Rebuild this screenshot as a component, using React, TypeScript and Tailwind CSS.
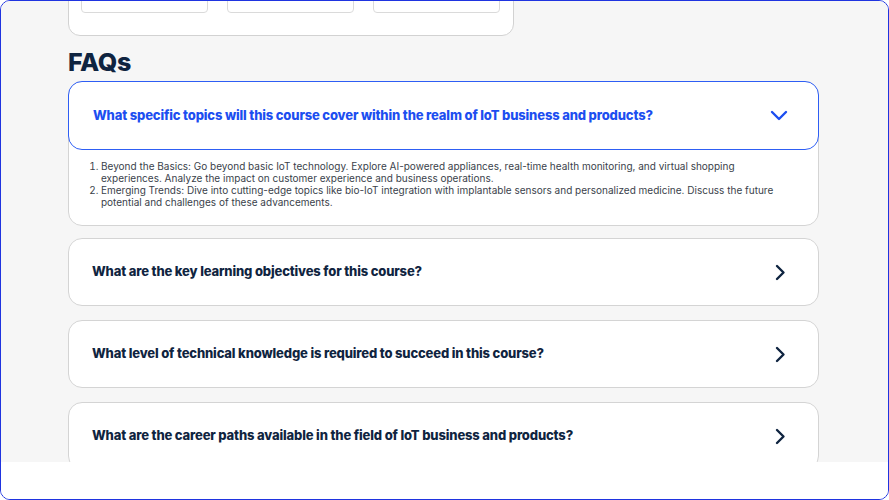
const questions = [
  'What are the key learning objectives for this course?',
  'What level of technical knowledge is required to succeed in this course?',
  'What are the career paths available in the field of IoT business and products?',
];

function ChevronDownIcon() {
  return (
    <svg width="18" height="11" viewBox="0 0 18 11" fill="none" className="text-[#1c4ef0]">
      <path d="M2 2l7 7 7-7" stroke="currentColor" strokeWidth="2.4" strokeLinecap="round" strokeLinejoin="round" />
    </svg>
  );
}

function ChevronRightIcon() {
  return (
    <svg width="11" height="17" viewBox="0 0 11 17" fill="none" className="text-[#0f2440]">
      <path d="M2 2l6.5 6.5L2 15" stroke="currentColor" strokeWidth="2.4" strokeLinecap="round" strokeLinejoin="round" />
    </svg>
  );
}

export default function App() {
  return (
    <div
      className="w-[889px] h-[500px] flex flex-col overflow-hidden rounded-[10px] border border-[#1f34e0] bg-white"
      style={{ fontFamily: 'Inter, "Noto Sans", sans-serif' }}
    >
      <div className="flex-1 overflow-hidden bg-[#f6f6f6] pl-[67px] pr-[69px]">
        {/* Cut-off card from the previous section */}
        <div className="-mt-[41px] w-[446px] rounded-xl border border-[#d2d2d2] bg-white px-[12px] pb-[22px]">
          <div className="flex h-[52px] gap-[19px]">
            <div className="w-[127px] rounded-b-[4px] border border-[#dadada]" />
            <div className="w-[127px] rounded-b-[4px] border border-[#dadada]" />
            <div className="w-[127px] rounded-b-[4px] border border-[#dadada]" />
          </div>
        </div>

        <h2 className="mt-[9px] mb-[2px] text-[25px] leading-[34px] font-extrabold tracking-[-0.3px] text-[#0f2440]">
          FAQs
        </h2>

        {/* Open item */}
        <div className="rounded-[14px] border border-[#d4d4d4] bg-white">
          <button className="-mx-px -mt-px flex h-[69px] w-[calc(100%+2px)] items-center justify-between rounded-[14px] border border-[#2e5ef4] bg-white pl-[24px] pr-[30px] text-left">
            <span className="text-[13px] font-extrabold tracking-[-0.15px] text-[#1c4ef0]">
              What specific topics will this course cover within the realm of IoT business and products?
            </span>
            <ChevronDownIcon />
          </button>
          <ol className="list-decimal pt-[10px] pb-[17px] pl-[32px] pr-[29px] text-[10px] leading-[12px] text-[#3a3f4b]">
            <li>
              Beyond the Basics: Go beyond basic IoT technology. Explore AI-powered appliances, real-time health monitoring, and virtual shopping experiences. Analyze the impact on customer experience and business operations.
            </li>
            <li>
              Emerging Trends: Dive into cutting-edge topics like bio-IoT integration with implantable sensors and personalized medicine. Discuss the future potential and challenges of these advancements.
            </li>
          </ol>
        </div>

        {questions.map((q, i) => (
          <div
            key={q}
            className={`flex h-[68px] items-center justify-between rounded-[14px] border border-[#d4d4d4] bg-white pl-[23px] pr-[32px] ${
              i === 0 ? 'mt-[12px]' : 'mt-[14px]'
            }`}
          >
            <span className="text-[13px] font-extrabold tracking-[-0.15px] text-[#0f2440]">{q}</span>
            <ChevronRightIcon />
          </div>
        ))}
      </div>
      <div className="h-[37px] shrink-0 bg-white" />
    </div>
  );
}
